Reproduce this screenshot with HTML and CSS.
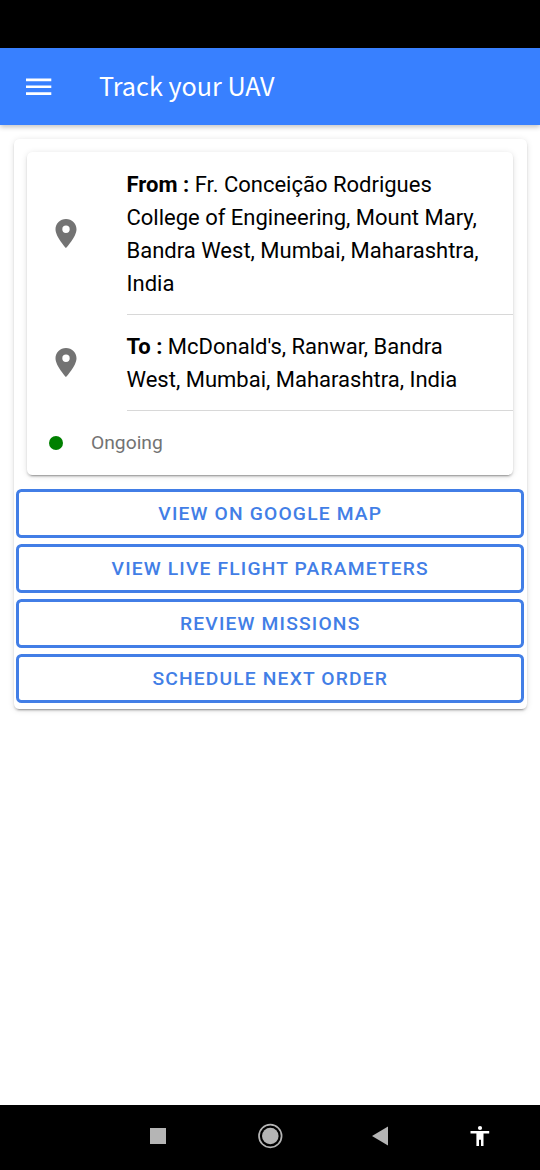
FILE: index.html
```html
<!DOCTYPE html>
<html lang="en">
<head>
<meta charset="utf-8">
<title>Track your UAV</title>
<link rel="stylesheet" href="styles.css">
</head>
<body>
<div class="status-bar"></div>
<header class="toolbar">
  <svg class="menu-icon" viewBox="0 0 26 18" aria-label="Menu"><path d="M0 .5h25.300v2.700H0zM0 7.400h25.300v2.700H0zM0 14.300h25.300v2.700H0z"/></svg>
  <h1 class="title">Track your UAV</h1>
</header>
<main class="content">
  <section class="card">
    <div class="mission">
      <div class="item">
        <svg class="pin" viewBox="0 0 21 29"><path fill-rule="evenodd" d="M10.5 0C4.7 0 0 4.6 0 10.2 0 17.8 10.5 29 10.5 29S21 17.8 21 10.2C21 4.6 16.3 0 10.5 0zm0 6.5a3.7 3.7 0 1 1 0 7.4 3.7 3.7 0 0 1 0-7.4z"/></svg>
        <p class="address address-from"><b>From :</b> Fr. Conceição Rodrigues College of Engineering, Mount Mary, Bandra West, Mumbai, Maharashtra, India</p>
      </div>
      <div class="item">
        <svg class="pin" viewBox="0 0 21 29"><path fill-rule="evenodd" d="M10.5 0C4.7 0 0 4.6 0 10.2 0 17.8 10.5 29 10.5 29S21 17.8 21 10.2C21 4.6 16.3 0 10.5 0zm0 6.5a3.7 3.7 0 1 1 0 7.4 3.7 3.7 0 0 1 0-7.4z"/></svg>
        <p class="address address-to"><b>To :</b> McDonald's, Ranwar, Bandra West, Mumbai, Maharashtra, India</p>
      </div>
      <div class="state"><span class="dot"></span><span>Ongoing</span></div>
    </div>
    <div class="actions">
      <button class="action">VIEW ON GOOGLE MAP</button>
      <button class="action">VIEW LIVE FLIGHT PARAMETERS</button>
      <button class="action">REVIEW MISSIONS</button>
      <button class="action">SCHEDULE NEXT ORDER</button>
    </div>
  </section>
</main>
<nav class="nav-bar">
  <svg class="nav-icons" viewBox="0 0 540 65">
    <path fill="#b5b5b5" d="M150 23h16v16h-16zM372 31l16-9.500v19z"/>
    <circle cx="270.3" cy="31" r="8.3" fill="#b5b5b5"/>
    <circle cx="270.3" cy="31" r="11.3" fill="none" stroke="#b5b5b5" stroke-width="1.7"/>
    <g fill="#fff"><circle cx="480" cy="23" r="2.1"/><path d="M470.500 26h18.700v2.500H483.500V41H481v-6.200h-2V41h-2.600V28.500h-5.900z"/></g>
  </svg>
</nav>
</body>
</html>
```

FILE: styles.css
```css
* { box-sizing: border-box; }
body {
  margin: 0;
  height: 1170px;
  display: flex;
  flex-direction: column;
  background: #fff;
  color: #000;
  font-family: Roboto, sans-serif;
}
.status-bar { height: 48px; flex: none; background: #000; }
.toolbar {
  height: 77px;
  flex: none;
  display: flex;
  align-items: center;
  gap: 47px;
  padding-left: 26px;
  background: #3880ff;
  color: #fff;
  box-shadow: 0 2px 5px rgba(0, 0, 0, .24);
}
.menu-icon { width: 26px; height: 18px; fill: #fff; }
.title {
  margin: 0;
  padding-bottom: 3px;
  font: 400 25.2px/38px "Noto Sans CJK SC", sans-serif;
}
.content { flex: 1; padding: 14px 13.5px; }
.card, .mission {
  background: #fff;
  border-radius: 5.5px;
  box-shadow: 0 4px 1px -3px rgba(0, 0, 0, .2), 0 2px 2px rgba(0, 0, 0, .14), 0 1px 6px rgba(0, 0, 0, .12);
}
.card { padding: 13px 3px 5.5px; height: 570px; }
.mission { height: 323px; margin: 0 10.5px 13.5px; }
.item { display: flex; align-items: center; padding-left: 28px; }
.pin { width: 22px; height: 29px; flex: none; fill: #737373; }
.address {
  flex: 1;
  margin: 0 0 0 49.5px;
  padding: 15.5px 20px 14px 0;
  border-bottom: 1px solid #d8d8d8;
  font-size: 22px;
  line-height: 33px;
}
.address-to { padding-top: 15px; }
.state {
  height: 64px;
  display: flex;
  align-items: center;
  gap: 28px;
  padding-left: 22px;
  color: #737373;
  font-size: 19.25px;
}
.dot { width: 14px; height: 14px; border-radius: 50%; background: green; }
.actions { display: flex; flex-direction: column; gap: 5.5px; }
.action {
  height: 49.5px;
  margin-left: -.5px;
  padding: 0 0 0 1px;
  border: 3px solid #427ee6;
  border-radius: 5.5px;
  background: transparent;
  color: #427ee6;
  font: 500 19.25px Roboto, sans-serif;
  letter-spacing: .06em;
}
.nav-bar { height: 65px; flex: none; background: #000; }
.nav-icons { display: block; width: 540px; height: 65px; }
```
